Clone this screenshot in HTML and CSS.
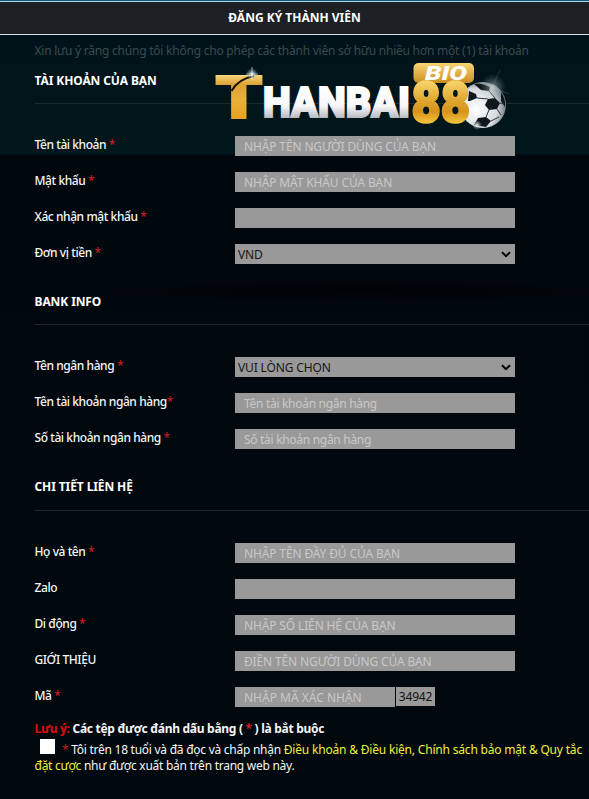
FILE: index.html
```html
<!DOCTYPE html>
<html lang="vi">
<head>
<meta charset="utf-8">
<title>Đăng ký thành viên</title>
<link rel="stylesheet" href="styles.css">
</head>
<body>
<header class="topbar"><h1>ĐĂNG KÝ THÀNH VIÊN</h1></header>
<main class="page">
  <p class="notice">Xin lưu ý rằng chúng tôi không cho phép các thành viên sở hữu nhiều hơn một (1) tài khoản</p>
  <form>
    <section class="account">
      <h2>TÀI KHOẢN CỦA BẠN</h2>
      <div class="row"><label>Tên tài khoản <i>*</i></label><input class="caps" placeholder="NHẬP TÊN NGƯỜI DÙNG CỦA BẠN"></div>
      <div class="row"><label>Mật khẩu <i>*</i></label><input class="caps" placeholder="NHẬP MẬT KHẨU CỦA BẠN"></div>
      <div class="row"><label>Xác nhận mật khẩu <i>*</i></label><input></div>
      <div class="row"><label>Đơn vị tiền <i>*</i></label><div class="select"><span>VND</span><svg width="10" height="7" viewBox="0 0 10 7"><path d="M1 1.2 5 5.2 9 1.2"/></svg></div></div>
    </section>
    <section class="bank">
      <h2>BANK INFO</h2>
      <div class="row"><label>Tên ngân hàng <i>*</i></label><div class="select"><span>VUI LÒNG CHỌN</span><svg width="10" height="7" viewBox="0 0 10 7"><path d="M1 1.2 5 5.2 9 1.2"/></svg></div></div>
      <div class="row"><label>Tên tài khoản ngân hàng<i>*</i></label><input placeholder="Tên tài khoản ngân hàng"></div>
      <div class="row"><label>Số tài khoản ngân hàng <i>*</i></label><input placeholder="Số tài khoản ngân hàng"></div>
    </section>
    <section class="contact">
      <h2>CHI TIẾT LIÊN HỆ</h2>
      <div class="row"><label>Họ và tên <i>*</i></label><input class="caps" placeholder="NHẬP TÊN ĐẦY ĐỦ CỦA BẠN"></div>
      <div class="row"><label>Zalo</label><input></div>
      <div class="row"><label>Di động <i>*</i></label><input class="caps" placeholder="NHẬP SỐ LIÊN HỆ CỦA BẠN"></div>
      <div class="row"><label>GIỚI THIỆU</label><input class="caps" placeholder="ĐIỀN TÊN NGƯỜI DÙNG CỦA BẠN"></div>
      <div class="row"><label>Mã <i>*</i></label><input class="caps short" placeholder="NHẬP MÃ XÁC NHẬN"><span class="captcha">34942</span></div>
    </section>
    <div class="terms">
      <p class="note"><em>Lưu ý:</em> Các tệp được đánh dấu bằng ( <i>*</i> ) là bắt buộc</p>
      <p class="agree"><span class="check"></span><span><i>*</i> Tôi trên 18 tuổi và đã đọc và chấp nhận <a>Điều khoản &amp; Điều kiện, Chính sách bảo mật &amp; Quy tắc</a></span></p>
      <p class="agree2"><a>đặt cược</a> như được xuất bản trên trang web này.</p>
    </div>
  </form>
  <svg class="logo" width="310" height="84" viewBox="205 55 310 84">
    <defs>
      <linearGradient id="bio" x1="0" y1="0" x2="0" y2="1"><stop offset="0" stop-color="#f8d674"/><stop offset="1" stop-color="#c98e22"/></linearGradient>
      <linearGradient id="silver" gradientUnits="userSpaceOnUse" x1="0" y1="86" x2="0" y2="119"><stop offset="0" stop-color="#fff"/><stop offset=".6" stop-color="#f8f8fa"/><stop offset="1" stop-color="#b4b5bd"/></linearGradient>
      <linearGradient id="gold88" gradientUnits="userSpaceOnUse" x1="0" y1="82" x2="0" y2="124"><stop offset="0" stop-color="#f6d269"/><stop offset=".45" stop-color="#dfa52e"/><stop offset=".7" stop-color="#d8921a"/><stop offset="1" stop-color="#f3c73f"/></linearGradient>
      <linearGradient id="goldT" gradientUnits="userSpaceOnUse" x1="0" y1="-44" x2="0" y2="0"><stop offset="0" stop-color="#fbe08a"/><stop offset=".25" stop-color="#dda135"/><stop offset=".6" stop-color="#e8b03a"/><stop offset="1" stop-color="#e6a422"/></linearGradient>
      <radialGradient id="ball" cx=".35" cy=".6" r=".65"><stop offset="0" stop-color="#fff"/><stop offset=".7" stop-color="#d5dadd"/><stop offset="1" stop-color="#707a80"/></radialGradient>
      <radialGradient id="glow"><stop offset="0" stop-color="#fff"/><stop offset=".25" stop-color="#dfe8ec" stop-opacity=".7"/><stop offset="1" stop-color="#8fa9b5" stop-opacity="0"/></radialGradient>
    </defs>
    <circle cx="483" cy="105" r="23" fill="url(#ball)"/>
    <g fill="#0d171c">
      <path d="M488 99 495 98 500 103 497 109 489 110 485 105Z"/>
      <path d="M474 84Q482 82 490 87L489 91 481 90Z"/>
      <path d="M501 92Q506 100 505 107L501 101Z"/>
      <path d="M478 118 486 117 491 121 486 127 474 125Z"/>
      <path d="M469 91 476 94 477 98 470 101 468 101Z"/>
    </g>
    <path d="M477 98 488 99M489 91 495 98M500 103 504 104M497 109 501 115M489 110 486 117M491 121 499 117" stroke="#263238" fill="none"/>
    <g class="wordmark">
      <text class="t" transform="translate(215.500 117.500)" fill="url(#goldT)" stroke="url(#goldT)" textLength="47" lengthAdjust="spacingAndGlyphs">T</text>
      <text class="hanbai" x="263" y="117" textLength="147" lengthAdjust="spacingAndGlyphs" fill="url(#silver)" stroke="url(#silver)">HANBAI</text>
      <rect x="413.500" y="63" width="60.500" height="20" rx="5" fill="url(#bio)"/>
      <text class="eights" x="411.500" y="121.500" textLength="58.500" lengthAdjust="spacingAndGlyphs" fill="url(#gold88)" stroke="url(#gold88)">88</text>
      <text class="bio" x="425" y="79.500" textLength="42" lengthAdjust="spacingAndGlyphs">BIO</text>
    </g>
    <path d="M231.500 91Q238 79 254 76" stroke="#171204" stroke-width="2" fill="none"/>
    <circle cx="252" cy="74" r="6" fill="url(#glow)"/>
    <path d="M252 67V80M246 74H258" stroke="#fff" stroke-width=".6"/>
    <circle cx="493" cy="87" r="13" fill="url(#glow)" opacity=".5"/>
    <path d="M489 94 500 70M481 83 509 94" stroke="#dbe4e8" stroke-width=".5" opacity=".3"/>
    <circle cx="477" cy="125" r="5" fill="url(#glow)"/>
  </svg>
</main>
</body>
</html>
```
FILE: styles.css
```css
* { box-sizing: border-box; }
body {
  margin: 0;
  min-height: 799px;
  background: #01080e;
  color: #f4f6f7;
  font: 12px/16px "Noto Sans", "Open Sans", sans-serif;
  overflow: hidden;
}
h1, h2, p { margin: 0; }
i, em { font-style: normal; }
i { color: #c91c24; }
a { color: #f0f03c; }

.topbar {
  height: 35px;
  padding-top: 1px;
  background: #1d2025;
  border-bottom: 1px solid #d5e4ee;
  border-top: 1px solid #165a7b;
  box-shadow: inset 0 1px #a9d5e9;
}
h1 { font-size: 12px; line-height: 32px; text-align: center; color: #fff; letter-spacing: 0; }

.page {
  position: relative;
  padding-left: 34.5px;
  height: 764px;
  background:
    radial-gradient(ellipse 300px 12px at 360px 256px, #000205, transparent),
    linear-gradient(#00131a, #00171b 118px, #01080d 121px, #01080e);
}
.notice { height: 34px; padding-top: 8px; color: #3c4b50; white-space: nowrap; letter-spacing: -.23px; }
h2 { height: 35px; margin-bottom: 32px; font-size: 12px; line-height: 24px; color: #fff; border-bottom: 1px solid #1b2a30; letter-spacing: -.1px; }
.account { height: 221px; }
.bank { height: 185px; }
.contact { height: 232px; }
.contact h2 { height: 36px; }

.row { display: flex; height: 20px; margin-bottom: 16px; }
label { width: 200.5px; padding-top: 1px; font-weight: 500; white-space: nowrap; letter-spacing: -.43px; }
input, .select {
  width: 280px;
  height: 20px;
  padding: 1px 9px 0;
  border: 0;
  border-radius: 0;
  background: #999;
  font: 12px/16px "Noto Sans", "Open Sans", sans-serif;
  letter-spacing: -.3px;
}
input.caps, .select { letter-spacing: -.14px; }
input::placeholder { color: #c8c8c8; opacity: 1; }
.select { display: flex; justify-content: space-between; align-items: center; padding: 1px 4px 0 3px; color: #161616; }
.select svg { fill: none; stroke: #000; stroke-width: 2; }
input.short { width: 160px; letter-spacing: 0; }
.captcha { width: 39px; height: 19px; margin-left: 1px; background: #999; color: #111; text-align: center; line-height: 20px; letter-spacing: -.2px; }

.terms p { white-space: nowrap; letter-spacing: -.26px; }
.terms .note { font-weight: 700; margin-top: 14px; letter-spacing: -.29px; }
.note em { color: #e00d0d; }
.agree { display: flex; height: 21px; align-items: flex-end; }
.agree a { letter-spacing: -.19px; }
.check { flex: none; width: 15px; height: 15px; margin: 0 7.5px 4px 5px; background: #fff; }

.logo { position: absolute; left: 205px; top: 20px; }
.wordmark { font-family: Roboto, "Open Sans", sans-serif; font-weight: 900; }
.t { font-size: 59px; stroke-width: 2px; }
.hanbai { font-size: 42px; stroke-width: 2px; }
.bio { font-size: 20px; font-style: italic; fill: #fff; }
.eights { font-size: 55px; stroke-width: 2.500px; }
```
